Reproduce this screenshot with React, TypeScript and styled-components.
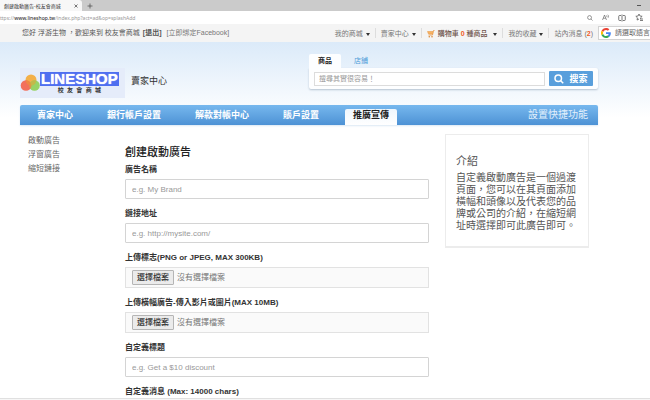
import React, { useRef } from 'react';
import styled, { createGlobalStyle } from 'styled-components';

const GlobalStyle = createGlobalStyle`
  *, *::before, *::after { box-sizing: border-box; }
  body {
    margin: 0;
    background: #fff;
    color: #333;
    font-family: "Liberation Sans", "Noto Sans CJK TC", sans-serif;
    font-size: 8px;
    line-height: 12px;
  }
  button, input { font: inherit; color: inherit; }
  button { border: 0; padding: 0; background: none; cursor: pointer; white-space: nowrap; }
  a { color: inherit; text-decoration: none; white-space: nowrap; }
  h1, h2, p, ul { margin: 0; padding: 0; }
  ul { list-style: none; }
  svg { display: block; flex: none; }
`;

const Screen = styled.div`
  height: 100vh;
  display: flex;
  flex-direction: column;
  overflow: hidden;
`;

/* Browser window */
const TabStrip = styled.div`
  flex: none;
  height: 11px;
  display: flex;
  align-items: center;
  gap: 5px;
  padding-right: 9px;
  background: #cbcbcb;
`;

const BrowserTab = styled.div`
  align-self: stretch;
  width: 82px;
  display: flex;
  align-items: center;
  justify-content: space-between;
  padding: 0 4px;
  border-radius: 0 3px 0 0;
  background: #f7f7f7;
  color: #333;
  font-size: 5px;
  white-space: nowrap;
`;

const ChromeButton = styled.button<{ $push?: boolean }>`
  display: flex;
  margin-left: ${(p) => (p.$push ? 'auto' : '0')};
  color: #555;
`;

const AddressBar = styled.div`
  flex: none;
  height: 13px;
  display: flex;
  align-items: center;
  justify-content: space-between;
  padding-right: 6px;
  overflow: hidden;
  background: #fff;
`;

const Url = styled.span`
  color: #999;
  font-family: "Noto Sans", sans-serif;
  font-size: 5px;
  white-space: nowrap;

  b { color: #333; font-weight: 500; }
`;

const AddressTools = styled.div`
  display: flex;
  align-items: center;
  gap: 9px;
`;

/* Account strip */
const AccountBar = styled.div`
  flex: none;
  height: 18px;
  display: flex;
  align-items: center;
  justify-content: space-between;
  padding-left: 22px;
  background: #f4f4f4;
  color: #555;
  font-size: 7px;
  overflow: hidden;
`;

const Greeting = styled.div`
  display: flex;
  gap: 3px;
  white-space: nowrap;

  a:last-child { margin-left: 2px; color: #777; }
`;

const AccountMenu = styled.nav`
  display: flex;
  align-items: center;
  color: #777;
`;

const MenuItem = styled.div`
  display: flex;
  align-items: center;
  gap: 3px;
  padding: 2px 5px 0;
  border-left: 1px solid #ddd;
  line-height: 8px;

  &:first-child { border-left: 0; }
`;

const MenuButton = styled.button<{ $strong?: boolean }>`
  display: flex;
  align-items: center;
  gap: ${(p) => (p.$strong ? '2px' : '3px')};
  color: ${(p) => (p.$strong ? '#6d5148' : 'inherit')};
  font-weight: ${(p) => (p.$strong ? 500 : 400)};
  line-height: 8px;
`;

const Caret = styled.span`
  border: 2px solid transparent;
  border-top: 3px solid #333;
  border-bottom: 0;
`;

const Count = styled.span`
  color: #f05a1e;
  font-weight: 700;
`;

const LanguageButton = styled.button`
  height: 14px;
  display: flex;
  align-items: center;
  align-self: flex-end;
  gap: 4px;
  padding-left: 2px;
  border: 1px solid #d2d2d2;
  border-right: 0;
  background: #fff;
  color: #666;
`;

/* Shop page */
const Page = styled.div`
  flex: 1;
  min-height: 0;
  overflow: hidden;
  padding: 0 52px 0 20px;
  background: linear-gradient(#dbeaf9, #fff 76px);
`;

const Header = styled.header`
  display: flex;
  align-items: flex-start;
  justify-content: space-between;
  height: 63px;
`;

const Brand = styled.div`
  display: flex;
  align-items: center;
  gap: 6px;
  padding-top: 26px;
`;

const Logo = styled.a`
  width: 105px;
  height: 30px;
  display: flex;
  align-items: center;
  background: #e5ecfa;
`;

const LogoText = styled.span`
  display: flex;
  flex-direction: column;
  align-items: center;
  color: #333;
  font-size: 6px;
  font-weight: 700;
  line-height: 8px;
`;

const LogoName = styled.span`
  padding: 0 1px;
  background: #4f6ff0;
  color: #fff;
  font-size: 15px;
  line-height: 14px;
  text-shadow: 0 0 1px #fff;
`;

const SiteName = styled.a`
  margin-bottom: 5px;
  color: #333;
  font-size: 9px;
`;

const Search = styled.form`
  flex: 0 1 289px;
  padding-top: 12px;
`;

const SearchTabs = styled.div`
  display: flex;
  align-items: center;
`;

const SearchTab = styled.button<{ $active?: boolean }>`
  height: 14px;
  padding: 0 9px;
  border-radius: 2px 2px 0 0;
  background: ${(p) => (p.$active ? '#fdfeff' : 'transparent')};
  color: ${(p) => (p.$active ? '#222' : '#4d9bd8')};
  font-size: 7px;
  font-weight: ${(p) => (p.$active ? 700 : 400)};
  line-height: 12px;

  & + & { margin-left: 4px; }
`;

const SearchPanel = styled.div`
  display: flex;
  align-items: center;
  gap: 4px;
  height: 21px;
  padding: 0 5px;
  border-radius: 0 2px 2px 2px;
  background: #fdfeff;
  box-shadow: 0 1px 2px #b4c2d0;
`;

const SearchInput = styled.input`
  flex: 1;
  min-width: 0;
  height: 14px;
  padding: 0 4px;
  border: 1px solid #dcdcdc;
  background: #fff;
  font-size: 7px;

  &::placeholder { color: #999; }
`;

const SearchButton = styled.button`
  width: 44px;
  height: 15px;
  display: flex;
  align-items: center;
  justify-content: center;
  gap: 5px;
  border-radius: 1px;
  background: #599fdc;
  color: #fff;
  font-size: 9px;
  font-weight: 700;
`;

const MainNav = styled.nav`
  display: flex;
  align-items: flex-end;
  height: 20px;
  padding: 0 10px 0 9px;
  border-radius: 2px 2px 0 0;
  background: linear-gradient(#77b8ee, #4d92d5);
  box-shadow: 0 1px 2px #dbe8f4;
`;

const NavLink = styled.a<{ $active?: boolean }>`
  height: 16px;
  margin-right: ${(p) => (p.$active ? '0' : '18px')};
  padding: 0 8px;
  border-radius: 2px 2px 0 0;
  background: ${(p) => (p.$active ? 'linear-gradient(#eef6fd, #fff)' : 'transparent')};
  color: ${(p) => (p.$active ? '#222' : '#fff')};
  font-size: 9px;
  font-weight: 700;
  line-height: 13px;
`;

const Shortcut = styled.a`
  margin-left: auto;
  color: #e2f0fc;
  font-size: 10px;
  line-height: 20px;
`;

const Columns = styled.div`
  display: flex;
  align-items: flex-start;
  padding: 9px 9px 0 8px;
`;

const SideMenu = styled.ul`
  flex: none;
  width: 97px;
  color: #666;
  line-height: 14px;
`;

const AdForm = styled.form`
  flex: 1;
  min-width: 0;
  padding-top: 10px;
`;

const Title = styled.h1`
  margin-bottom: 4px;
  color: #222;
  font-size: 11px;
  font-weight: 500;
  line-height: 16px;
`;

const Field = styled.div`
  display: flex;
  flex-direction: column;
  gap: 3px;
  margin-bottom: 9px;
`;

const FieldLabel = styled.label`
  color: #333;
  font-weight: 700;
  line-height: 12px;
  white-space: nowrap;
`;

const TextInput = styled.input`
  width: 100%;
  height: 20px;
  padding: 0 6px;
  border: 1px solid #d4d4d4;
  border-radius: 1px;
  background: #fff;

  &::placeholder { color: #999; }
`;

const FileBox = styled.div`
  height: 21px;
  display: flex;
  align-items: center;
  gap: 3px;
  padding: 0 6px;
  border: 1px solid #e2e2e2;
  background: #fafafa;
  color: #777;

  input { display: none; }
`;

const FileButton = styled.button`
  width: 42px;
  height: 15px;
  border: 1px solid #b5b5b5;
  border-radius: 1px;
  background: #ebebeb;
  color: #333;
  font-weight: 500;
`;

const Intro = styled.aside`
  flex: none;
  width: 144px;
  margin-left: 16px;
  padding: 18px 10px 14px;
  border: 1px solid #ececec;
  border-bottom-width: 2px;
  background: #fff;
  color: #555;
  font-size: 10px;

  h2 {
    margin-bottom: 3px;
    font-size: 11px;
    font-weight: 400;
    line-height: 16px;
  }
`;

const WindowEdge = styled.div`
  flex: none;
  height: 2px;
  border-top: 1px solid #e0e0e0;
  background: #f6f6f6;
`;

function FileField({ id, label }: { id: string; label: string }) {
  const input = useRef<HTMLInputElement>(null);
  return (
    <Field>
      <FieldLabel htmlFor={id}>{label}</FieldLabel>
      <FileBox>
        <input id={id} ref={input} type="file" />
        <FileButton type="button" onClick={() => input.current?.click()}>選擇檔案</FileButton>
        <span>沒有選擇檔案</span>
      </FileBox>
    </Field>
  );
}

function TextField({ id, label, placeholder }: { id: string; label: string; placeholder: string }) {
  return (
    <Field>
      <FieldLabel htmlFor={id}>{label}</FieldLabel>
      <TextInput id={id} type="text" placeholder={placeholder} />
    </Field>
  );
}

const LogoMark = () => (
  <svg width="20" height="18" viewBox="0 0 20 18">
    <circle cx="11" cy="6" r="5.5" fill="#f3b04a" />
    <circle cx="14.5" cy="11.5" r="5.3" fill="#97d365" />
    <circle cx="6" cy="11.5" r="5.3" fill="#f2705c" />
    <path d="M10.3 8.4a5.3 5.3 0 0 1 0 6.2 5.3 5.3 0 0 1 0-6.2z" fill="#d99a45" />
    <path d="M5.7 6.2a5.3 5.3 0 0 1 4.8 2.5l.3 2.8a5.5 5.5 0 0 1-5.1-5.3z" fill="#ee8843" />
    <path d="M16.2 6.5a5.5 5.5 0 0 1-5.4 5l-.4-2.9a5.3 5.3 0 0 1 5.8-2.1z" fill="#c3b849" />
  </svg>
);

const CartIcon = () => (
  <svg width="8" height="8" viewBox="0 0 16 16">
    <path d="M15 1h-2l-2 9H3" fill="none" stroke="#e9923a" strokeWidth="1.6" />
    <path d="M1 3h11l-1 5H3z" fill="#f6b464" stroke="#e9923a" />
    <circle cx="4.5" cy="13.5" r="1.5" fill="#d98028" />
    <circle cx="10" cy="13.5" r="1.5" fill="#d98028" />
  </svg>
);

const GoogleIcon = () => (
  <svg width="10" height="10" viewBox="0 0 48 48">
    <path fill="#EA4335" d="M24 9.5c3.5 0 6.7 1.2 9.2 3.6l6.9-6.9C35.9 2.4 30.5 0 24 0 14.6 0 6.5 5.4 2.6 13.2l8 6.2C12.4 13.7 17.7 9.5 24 9.5z" />
    <path fill="#4285F4" d="M47 24.6c0-1.6-.2-3.1-.4-4.6H24v9h12.900c-.6 3-2.2 5.5-4.7 7.2l7.7 6C44.4 38 47 31.800 47 24.600z" />
    <path fill="#FBBC05" d="M10.5 28.6a14.5 14.5 0 0 1 0-9.200l-8-6.200a24 24 0 0 0 0 21.600z" />
    <path fill="#34A853" d="M24 48c6.5 0 11.9-2.1 15.9-5.8l-7.7-6c-2.2 1.4-4.9 2.3-8.2 2.3-6.3 0-11.6-4.2-13.5-9.9l-8 6.2C6.5 42.6 14.6 48 24 48z" />
  </svg>
);

const MagnifierIcon = ({ size, width }: { size: number; width: number }) => (
  <svg width={size} height={size} viewBox="0 0 20 20" fill="none" stroke="currentColor" strokeWidth={width}>
    <circle cx="8.5" cy="8.5" r="6.5" />
    <path d="M13.5 13.5l5 5" />
  </svg>
);

const ReadAloudIcon = () => (
  <svg width="7" height="7" viewBox="0 0 14 14" fill="none" stroke="currentColor" strokeWidth="1.2">
    <path d="M1 12L5 2l4 10M2.500 8.500h5M9 3c1 .7 1 2.300.4 3.200M11.500 1.500c1.800 1.600 1.800 4.200.6 6" />
  </svg>
);

const SplitIcon = () => (
  <svg width="8" height="8" viewBox="0 0 16 16" fill="none" stroke="currentColor" strokeWidth="1.6">
    <path d="M6 3H3a1.500 1.500 0 0 0-1.500 1.500v7A1.500 1.500 0 0 0 3 13h3M10 3h3a1.500 1.500 0 0 1 1.500 1.500v7A1.500 1.500 0 0 1 13 13h-3M8 1v14" />
  </svg>
);

const FavoritesIcon = () => (
  <svg width="9" height="9" viewBox="0 0 18 18" fill="none" stroke="currentColor" strokeWidth="1.5">
    <path d="M8 2l1.900 4 4.400.6-3.200 3.100.4 2M8 2L6.100 6l-4.400.6 3.200 3.100-.8 4.400L8 12M10 12h6M10 15h6" />
  </svg>
);

export default function App() {
  return (
    <Screen lang="zh-TW">
      <GlobalStyle />
      <TabStrip>
        <BrowserTab>
          <span>創建啟動廣告-校友會商城</span>
          <ChromeButton aria-label="關閉分頁">
            <svg width="4" height="4" viewBox="0 0 8 8" stroke="currentColor" strokeWidth="1.6"><path d="M1 1l6 6M7 1L1 7" /></svg>
          </ChromeButton>
        </BrowserTab>
        <ChromeButton aria-label="新分頁">
          <svg width="6" height="6" viewBox="0 0 12 12" stroke="currentColor" strokeWidth="1.6"><path d="M6 1v10M1 6h10" /></svg>
        </ChromeButton>
        <ChromeButton $push aria-label="最小化">
          <svg width="5" height="3" viewBox="0 0 5 3" stroke="currentColor"><path d="M1 1.5h4" /></svg>
        </ChromeButton>
      </TabStrip>
      <AddressBar>
        <Url>ttps://<b>www.lineshop.tw</b>/index.php?act=ad&amp;op=splashAdd</Url>
        <AddressTools>
          <ChromeButton aria-label="縮放"><MagnifierIcon size={6} width={2} /></ChromeButton>
          <ChromeButton aria-label="朗讀"><ReadAloudIcon /></ChromeButton>
          <ChromeButton aria-label="分割視窗"><SplitIcon /></ChromeButton>
          <ChromeButton aria-label="我的最愛"><FavoritesIcon /></ChromeButton>
        </AddressTools>
      </AddressBar>

      <AccountBar>
        <Greeting>
          <span>您好 浮游生物 ，歡迎來到 校友會商城</span>
          <a href="#logout"><b>[退出]</b></a>
          <a href="#bind">[立即綁定Facebook]</a>
        </Greeting>
        <AccountMenu>
          <MenuItem><MenuButton>我的商城<Caret /></MenuButton></MenuItem>
          <MenuItem><MenuButton>賣家中心<Caret /></MenuButton></MenuItem>
          <MenuItem>
            <CartIcon />
            <MenuButton $strong>購物車<Count>0</Count>種商品&nbsp;&nbsp;<Caret /></MenuButton>
          </MenuItem>
          <MenuItem><MenuButton>我的收藏<Caret /></MenuButton></MenuItem>
          <MenuItem><a href="#messages">站內消息 (<Count>2</Count>)</a></MenuItem>
          <LanguageButton><GoogleIcon />請選取語言</LanguageButton>
        </AccountMenu>
      </AccountBar>

      <Page>
        <Header>
          <Brand>
            <Logo href="#home">
              <LogoMark />
              <LogoText>
                <LogoName>LINESHOP</LogoName>
                <span>校&nbsp;&nbsp;友&nbsp;&nbsp;會&nbsp;&nbsp;商&nbsp;&nbsp;城</span>
              </LogoText>
            </Logo>
            <SiteName href="#seller">賣家中心</SiteName>
          </Brand>
          <Search onSubmit={(e) => e.preventDefault()}>
            <SearchTabs>
              <SearchTab type="button" $active>商品</SearchTab>
              <SearchTab type="button">店鋪</SearchTab>
            </SearchTabs>
            <SearchPanel>
              <SearchInput type="text" aria-label="搜尋" placeholder="搜尋其實很容易！" />
              <SearchButton type="submit"><MagnifierIcon size={10} width={3} />搜索</SearchButton>
            </SearchPanel>
          </Search>
        </Header>

        <MainNav>
          <NavLink href="#seller">賣家中心</NavLink>
          <NavLink href="#bank">銀行帳戶設置</NavLink>
          <NavLink href="#ledger">解款對帳中心</NavLink>
          <NavLink href="#account">賬戶設置</NavLink>
          <NavLink href="#promote" $active>推廣宣傳</NavLink>
          <Shortcut href="#shortcuts">設置快捷功能</Shortcut>
        </MainNav>

        <Columns>
          <SideMenu>
            <li><a href="#splash">啟動廣告</a></li>
            <li><a href="#overlay">浮窗廣告</a></li>
            <li><a href="#links">縮短鏈接</a></li>
          </SideMenu>
          <AdForm onSubmit={(e) => e.preventDefault()}>
            <Title>創建啟動廣告</Title>
            <TextField id="name" label="廣告名稱" placeholder="e.g. My Brand" />
            <TextField id="url" label="鏈接地址" placeholder="e.g. http://mysite.com/" />
            <FileField id="logo" label="上傳標志(PNG or JPEG, MAX 300KB)" />
            <FileField id="banner" label="上傳橫幅廣告-傳入影片或圖片(MAX 10MB)" />
            <TextField id="title" label="自定義標題" placeholder="e.g. Get a $10 discount" />
            <Field>
              <FieldLabel htmlFor="message">自定義消息 (Max: 14000 chars)</FieldLabel>
              <TextInput id="message" type="text" />
            </Field>
          </AdForm>
          <Intro>
            <h2>介紹</h2>
            <p>自定義啟動廣告是一個過渡頁面，您可以在其頁面添加橫幅和頭像以及代表您的品牌或公司的介紹，在縮短網址時選擇即可此廣告即可。</p>
          </Intro>
        </Columns>
      </Page>
      <WindowEdge />
    </Screen>
  );
}
